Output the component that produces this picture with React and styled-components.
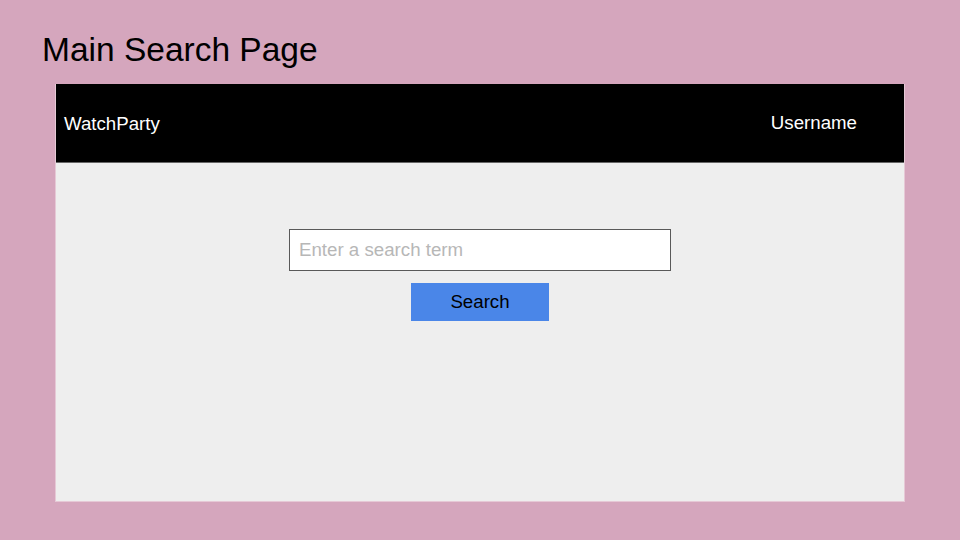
import React from "react";
import styled, { createGlobalStyle } from "styled-components";

const GlobalStyle = createGlobalStyle`
  html, body {
    margin: 0;
    padding: 0;
    background: #d5a6bd;
    font-family: "Liberation Sans", Arial, sans-serif;
  }
  * { box-sizing: border-box; }
`;

const Page = styled.div`
  width: 960px;
  height: 540px;
  background: #d5a6bd;
  display: flex;
  flex-direction: column;
  padding-top: 31px;
  overflow: hidden;
`;

const Title = styled.h1`
  margin: 0 0 15px 42px;
  font-size: 33.5px;
  line-height: 38px;
  font-weight: 400;
  color: #000;
`;

const Frame = styled.div`
  margin-left: 55px;
  width: 850px;
  height: 418px;
  border: 1px solid #e6c9d6;
  border-top: none;
  display: flex;
  flex-direction: column;
  background: #eeeeee;
`;

const Header = styled.header`
  height: 79px;
  background: #000;
  border-bottom: 1px solid #666;
  display: flex;
  align-items: center;
  justify-content: space-between;
  padding: 0 47px 0 8px;
  color: #fff;
  font-size: 18.7px;
`;

const NavText = styled.span`
  position: relative;
  top: ${(p) => p.$offset || 0}px;
`;

const Content = styled.main`
  flex: 1;
  display: flex;
  flex-direction: column;
  align-items: center;
  padding-top: 66px;
  gap: 12px;
`;

const SearchInput = styled.input`
  width: 382px;
  height: 42px;
  border: 1px solid #595959;
  background: #fff;
  padding: 0 9px;
  font-family: "Liberation Sans", Arial, sans-serif;
  font-size: 18.7px;
  color: #000;
  outline: none;
  &::placeholder {
    color: #b7b7b7;
  }
`;

const SearchButton = styled.button`
  width: 138px;
  height: 38px;
  border: none;
  background: #4a86e8;
  color: #000;
  font-family: "Liberation Sans", Arial, sans-serif;
  font-size: 18.7px;
  padding: 0;
  cursor: pointer;
`;

export default function App() {
  return (
    <>
      <GlobalStyle />
      <Page>
        <Title>Main Search Page</Title>
        <Frame>
          <Header>
            <NavText $offset={1}>WatchParty</NavText>
            <NavText $offset={0}>Username</NavText>
          </Header>
          <Content>
            <SearchInput placeholder="Enter a search term" />
            <SearchButton>Search</SearchButton>
          </Content>
        </Frame>
      </Page>
    </>
  );
}
